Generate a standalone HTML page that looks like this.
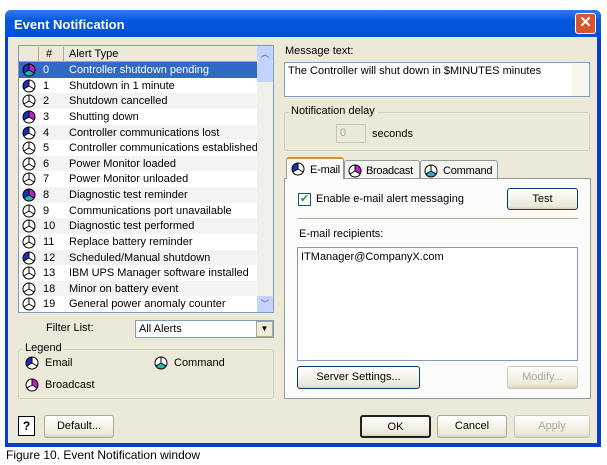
<!DOCTYPE html>
<html><head><meta charset="utf-8"><style>
*{box-sizing:border-box;margin:0;padding:0}
body{width:607px;height:465px;background:#fff;position:relative;font-family:"Liberation Sans",sans-serif;font-size:11px;color:#000;overflow:hidden}
.a{position:absolute;white-space:nowrap}
.win{left:5px;top:10px;width:596px;height:437px;background:#0a3ec8;border-radius:6px 6px 0 0}
.title{left:5px;top:10px;width:596px;height:27px;background:linear-gradient(#2f7cf0,#0456e0 40%,#0350d8);border-radius:6px 6px 0 0;color:#fff;font-weight:bold;font-size:13px;padding:7px 0 0 9px}
.body{left:8px;top:37px;width:589px;height:406px;background:#ece9d8}
.close{left:575px;top:13px;width:21px;height:21px;background:#d9532c;border:1px solid #fff;border-radius:3px;color:#fff;font-size:15px;text-align:center;line-height:18px;font-weight:bold}
.sunk{border:1px solid #7f9db9;background:#fff}
.btn{border:1px solid #003c74;border-radius:3px;background:linear-gradient(#fff,#ece9d8 85%,#d6d0c5);text-align:center;line-height:20px}
.grp{border:1px solid #d0d0bf;border-radius:3px}
.row{position:absolute;left:19px;width:238px;height:16px;line-height:16px;background:#f3f3f3;white-space:nowrap;overflow:hidden}
.row.w{background:#fff}
.row.s{background:#316ac5;color:#fff}
.row svg{position:absolute;left:3px;top:1px}
.row .n{position:absolute;left:24px}
.row .t{position:absolute;left:50px;white-space:nowrap}
.dis{color:#aca899;border-color:#c9c7ba}
</style></head><body>
<svg width="0" height="0" style="position:absolute"><defs>
<symbol id="ic" viewBox="0 0 14 14"><circle cx="7" cy="7" r="6" fill="none" stroke="#000" stroke-width="1"/><path d="M7 7V1M7 7L1.8 10M7 7L12.2 10" stroke="#000" stroke-width="1" fill="none"/></symbol>
<symbol id="i0" viewBox="0 0 14 14"><circle cx="7" cy="7" r="6" fill="#fff"/><use href="#ic"/></symbol>
<symbol id="ie" viewBox="0 0 14 14"><circle cx="7" cy="7" r="6" fill="#fff"/><path d="M7 7L7 1A6 6 0 0 0 1.8 10Z" fill="#1c2fb8"/><use href="#ic"/></symbol>
<symbol id="ib" viewBox="0 0 14 14"><circle cx="7" cy="7" r="6" fill="#fff"/><path d="M7 7L7 1A6 6 0 0 1 12.2 10Z" fill="#c020c8"/><use href="#ic"/></symbol>
<symbol id="icm" viewBox="0 0 14 14"><circle cx="7" cy="7" r="6" fill="#fff"/><path d="M7 7L1.8 10A6 6 0 0 0 12.2 10Z" fill="#28b0b8"/><use href="#ic"/></symbol>
<symbol id="ieb" viewBox="0 0 14 14"><circle cx="7" cy="7" r="6" fill="#fff"/><path d="M7 7L7 1A6 6 0 0 0 1.8 10Z" fill="#1c2fb8"/><path d="M7 7L7 1A6 6 0 0 1 12.2 10Z" fill="#c020c8"/><use href="#ic"/></symbol>
<symbol id="iall" viewBox="0 0 14 14"><circle cx="7" cy="7" r="6" fill="#fff"/><path d="M7 7L7 1A6 6 0 0 0 1.8 10Z" fill="#1c2fb8"/><path d="M7 7L7 1A6 6 0 0 1 12.2 10Z" fill="#c020c8"/><path d="M7 7L1.8 10A6 6 0 0 0 12.2 10Z" fill="#28b0b8"/><use href="#ic"/></symbol>
</defs></svg>
<div class="a win"></div>
<div class="a title">Event Notification</div>
<div class="a close">✕</div>
<div class="a body"></div>

<div class="a sunk" style="left:18px;top:45px;width:256px;height:268px"></div>
<div class="a" style="left:19px;top:46px;width:238px;height:16px;background:#ece9d8;border-bottom:1px solid #aca899"></div>
<div class="a" style="left:38px;top:47px;width:1px;height:14px;background:#aca899"></div>
<div class="a" style="left:63px;top:47px;width:1px;height:14px;background:#aca899"></div>
<div class="a" style="left:46px;top:48px">#</div>
<div class="a" style="left:69px;top:48px">Alert Type</div>
<div class="a" style="left:257px;top:46px;width:16px;height:266px;background:#f0f0ea"></div>
<div class="a" style="left:257px;top:46px;width:16px;height:16px;background:#c3d3fd;border-radius:2px;color:#4d6185;text-align:center;font-size:9px;line-height:16px">︿</div>
<div class="a" style="left:257px;top:62px;width:16px;height:20px;background:#c3d3fd;border-radius:2px"></div>
<div class="a" style="left:257px;top:296px;width:16px;height:16px;background:#c3d3fd;border-radius:2px;color:#4d6185;text-align:center;font-size:9px;line-height:16px">﹀</div>

<div class="row s" style="top:62px"><svg width="14" height="14"><use href="#iall"/></svg><span class="n">0</span><span class="t">Controller shutdown pending</span></div>
<div class="row w" style="top:77.6px"><svg width="14" height="14"><use href="#ie"/></svg><span class="n">1</span><span class="t">Shutdown in 1 minute</span></div>
<div class="row" style="top:93.2px"><svg width="14" height="14"><use href="#i0"/></svg><span class="n">2</span><span class="t">Shutdown cancelled</span></div>
<div class="row w" style="top:108.9px"><svg width="14" height="14"><use href="#ieb"/></svg><span class="n">3</span><span class="t">Shutting down</span></div>
<div class="row" style="top:124.5px"><svg width="14" height="14"><use href="#ie"/></svg><span class="n">4</span><span class="t">Controller communications lost</span></div>
<div class="row w" style="top:140.1px"><svg width="14" height="14"><use href="#i0"/></svg><span class="n">5</span><span class="t">Controller communications established</span></div>
<div class="row" style="top:155.7px"><svg width="14" height="14"><use href="#i0"/></svg><span class="n">6</span><span class="t">Power Monitor loaded</span></div>
<div class="row w" style="top:171.4px"><svg width="14" height="14"><use href="#i0"/></svg><span class="n">7</span><span class="t">Power Monitor unloaded</span></div>
<div class="row" style="top:187px"><svg width="14" height="14"><use href="#iall"/></svg><span class="n">8</span><span class="t">Diagnostic test reminder</span></div>
<div class="row w" style="top:202.6px"><svg width="14" height="14"><use href="#i0"/></svg><span class="n">9</span><span class="t">Communications port unavailable</span></div>
<div class="row" style="top:218.2px"><svg width="14" height="14"><use href="#i0"/></svg><span class="n">10</span><span class="t">Diagnostic test performed</span></div>
<div class="row w" style="top:233.9px"><svg width="14" height="14"><use href="#i0"/></svg><span class="n">11</span><span class="t">Replace battery reminder</span></div>
<div class="row" style="top:249.5px"><svg width="14" height="14"><use href="#ie"/></svg><span class="n">12</span><span class="t">Scheduled/Manual shutdown</span></div>
<div class="row w" style="top:265.1px"><svg width="14" height="14"><use href="#i0"/></svg><span class="n">13</span><span class="t">IBM UPS Manager software installed</span></div>
<div class="row" style="top:280.7px"><svg width="14" height="14"><use href="#i0"/></svg><span class="n">18</span><span class="t">Minor on battery event</span></div>
<div class="row w" style="top:296.4px;height:15.6px"><svg width="14" height="14"><use href="#i0"/></svg><span class="n">19</span><span class="t">General power anomaly counter</span></div>

<div class="a" style="left:46px;top:322px">Filter List:</div>
<div class="a sunk" style="left:135px;top:320px;width:139px;height:18px;padding:2px 3px">All Alerts</div>
<div class="a" style="left:256px;top:321px;width:17px;height:16px;background:#ece9d8;border:1px solid #aca899;text-align:center;font-size:8px;line-height:14px">▼</div>

<div class="a grp" style="left:18px;top:349px;width:256px;height:50px"></div>
<div class="a" style="left:23px;top:342px;background:#ece9d8;padding:0 2px">Legend</div>
<svg class="a" style="left:25px;top:356px" width="14" height="14"><use href="#ie"/></svg>
<div class="a" style="left:45px;top:357px">Email</div>
<svg class="a" style="left:154px;top:356px" width="14" height="14"><use href="#icm"/></svg>
<div class="a" style="left:174px;top:357px">Command</div>
<svg class="a" style="left:25px;top:378px" width="14" height="14"><use href="#ib"/></svg>
<div class="a" style="left:45px;top:379px">Broadcast</div>

<div class="a" style="left:285px;top:45px">Message text:</div>
<div class="a sunk" style="left:284px;top:62px;width:306px;height:35px;padding:2px 3px">The Controller will shut down in $MINUTES minutes</div>
<div class="a" style="left:572px;top:63px;width:16px;height:33px;background:#f7f7f2"></div>
<div class="a grp" style="left:284px;top:112px;width:306px;height:39px"></div>
<div class="a" style="left:289px;top:105px;background:#ece9d8;padding:0 2px">Notification delay</div>
<div class="a sunk dis" style="left:336px;top:124px;width:30px;height:19px;background:#ece9d8;padding:2px 3px">0</div>
<div class="a" style="left:372px;top:128px">seconds</div>

<div class="a" style="left:284px;top:178px;width:307px;height:221px;background:#fbfbf9;border:1px solid #919b9c"></div>
<div class="a" style="left:286px;top:157px;width:58px;height:22px;background:#fbfbf9;border:1px solid #919b9c;border-bottom:none;border-top:2px solid #e68b2c;border-radius:3px 3px 0 0"></div>
<div class="a" style="left:344px;top:160px;width:76px;height:18px;border:1px solid #919b9c;border-bottom:none;border-radius:3px 3px 0 0;background:#f4f3ee"></div>
<div class="a" style="left:420px;top:160px;width:78px;height:18px;border:1px solid #919b9c;border-bottom:none;border-radius:3px 3px 0 0;background:#f4f3ee"></div>
<svg class="a" style="left:291px;top:162px" width="14" height="14"><use href="#ie"/></svg>
<div class="a" style="left:310px;top:164px;letter-spacing:-0.2px">E-mail</div>
<svg class="a" style="left:348px;top:164px" width="14" height="14"><use href="#ib"/></svg>
<div class="a" style="left:366px;top:165px;letter-spacing:-0.3px">Broadcast</div>
<svg class="a" style="left:424px;top:164px" width="14" height="14"><use href="#icm"/></svg>
<div class="a" style="left:443px;top:165px;letter-spacing:-0.2px">Command</div>

<div class="a" style="left:298px;top:193px;width:13px;height:13px;border:1px solid #1c5180;background:#fff;font-size:11px;line-height:11px;text-align:center;color:#21a121">✔</div>
<div class="a" style="left:316px;top:193px">Enable e-mail alert messaging</div>
<div class="a btn" style="left:507px;top:188px;width:71px;height:22px">Test</div>
<div class="a" style="left:297px;top:218px;width:281px;height:2px;border-top:1px solid #aca899;border-bottom:1px solid #fff"></div>
<div class="a" style="left:299px;top:228px">E-mail recipients:</div>
<div class="a sunk" style="left:297px;top:247px;width:281px;height:114px;padding:3px 3px">ITManager@CompanyX.com</div>
<div class="a btn" style="left:297px;top:366px;width:123px;height:23px">Server Settings...</div>
<div class="a btn dis" style="left:507px;top:366px;width:71px;height:23px">Modify...</div>

<div class="a" style="left:18px;top:416px;width:17px;height:20px;border:1px solid #000;background:#fff;text-align:center;font-weight:bold;font-size:12px;line-height:18px">?</div>
<div class="a btn" style="left:44px;top:415px;width:70px;height:23px;border-color:#aca899">Default...</div>
<div class="a btn" style="left:360px;top:415px;width:71px;height:23px;border:2px solid #222">OK</div>
<div class="a btn" style="left:437px;top:415px;width:70px;height:23px;border-color:#aca899">Cancel</div>
<div class="a btn dis" style="left:514px;top:415px;width:76px;height:23px">Apply</div>

<div class="a" style="left:6px;top:448px;font-size:12px">Figure 10. Event Notification window</div>
</body></html>
